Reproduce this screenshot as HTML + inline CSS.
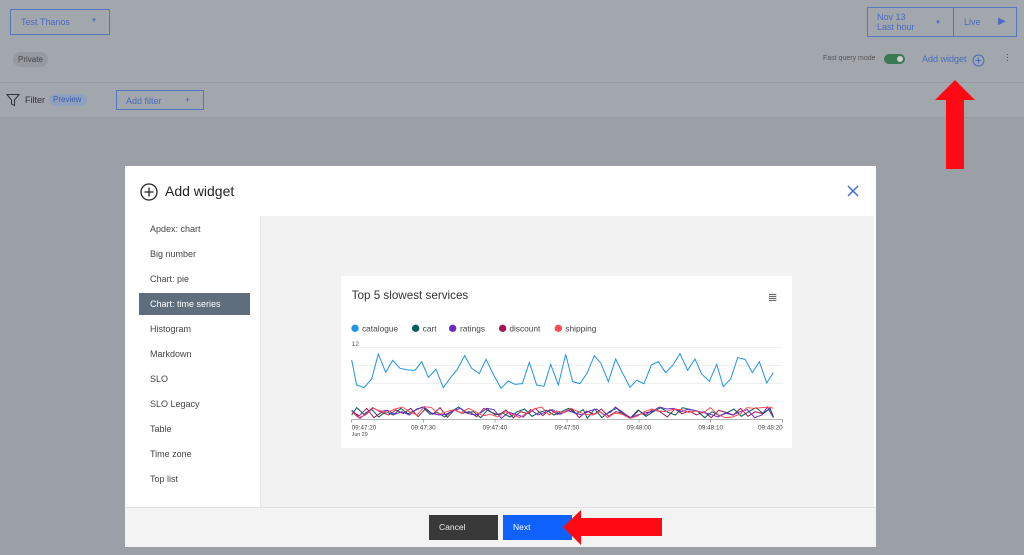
<!DOCTYPE html>
<html><head><style>
*{box-sizing:border-box;margin:0;padding:0}
body{width:1024px;height:555px;position:relative;overflow:hidden;font-family:"Liberation Sans",sans-serif;background:#9b9fa6}
.a{position:absolute}
.top{left:0;top:0;width:1024px;height:118px;background:#a2a6ad;border-bottom:1px solid #959aa1}
</style></head><body>
<div class="a top"></div>
<div class="a" style="left:0;top:82px;width:1024px;height:1px;background:#979ba2"></div>
<div class="a" style="left:10px;top:9px;width:100px;height:26px;border:1px solid #5577c0;font-size:9px;padding:7px 10px"><span style="color:#4a6bbf">Test Thanos</span><span style="position:absolute;left:80px;top:8px;color:#4a6bbf;font-size:6px">▼</span></div>
<div class="a" style="left:13px;top:52px;width:35px;height:15px;border-radius:8px;background:#959aa1;font-size:8px;color:#444;padding:3px 5px">Private</div>
<svg class="a" style="left:6px;top:93px" width="14" height="14" viewBox="0 0 14 14"><path d="M1 1.5h12L8.5 7v5.5l-3-1.5V7z" fill="none" stroke="#333" stroke-width="1"/></svg>
<div class="a" style="left:25px;top:95px;font-size:9px;color:#333">Filter</div>
<div class="a" style="left:49px;top:94px;width:38px;height:12px;border-radius:6px;background:#8f9fc0;font-size:8px;color:#3a5ea8;padding:1px 4px">Preview</div>
<div class="a" style="left:116px;top:90px;width:88px;height:20px;border:1px solid #5577c0;font-size:9px;color:#4a6bbf;padding:5px 9px">Add filter<span style="position:absolute;left:68px;top:4px">+</span></div>
<div class="a" style="left:867px;top:7px;width:87px;height:30px;border:1px solid #5577c0;font-size:9px;color:#4a6bbf;padding:4px 9px;line-height:10px">Nov 13<br>Last hour<span style="position:absolute;left:67px;top:10px;font-size:6px">▼</span></div>
<div class="a" style="left:953px;top:7px;width:64px;height:30px;border:1px solid #5577c0;font-size:9px;color:#4a6bbf;padding:9px 10px">Live<span style="position:absolute;left:44px;top:8px;font-size:10px">▶</span></div>
<div class="a" style="left:823px;top:55px;font-size:7px;color:#555">Fast query mode</div>
<div class="a" style="left:884px;top:54px;width:21px;height:10px;border-radius:5px;background:#3a7a52"><div style="position:absolute;right:2px;top:2px;width:6px;height:6px;border-radius:3px;background:#ccc"></div></div>
<div class="a" style="left:922px;top:54px;font-size:9px;color:#4a6bbf">Add widget</div>
<svg class="a" style="left:972px;top:54px" width="13" height="13"><circle cx="6.5" cy="6.5" r="5.5" fill="none" stroke="#4a6bbf"/><path d="M6.5 3.5v6M3.5 6.5h6" stroke="#4a6bbf"/></svg>
<div class="a" style="left:1006px;top:53px;font-size:9px;color:#444;line-height:3px">·<br>·<br>·</div>
<svg class="a" style="left:930px;top:78px" width="50" height="95"><path d="M25 2L45 22H34V91H16V22H5z" fill="#ff0a14"/></svg>

<div class="a" style="left:125px;top:166px;width:751px;height:381px;background:#fff">
 <svg class="a" style="left:15px;top:17px" width="18" height="18"><circle cx="9" cy="9" r="8" fill="none" stroke="#222" stroke-width="1.3"/><path d="M9 4.5v9M4.5 9h9" stroke="#222" stroke-width="1.3"/></svg>
 <div class="a" style="left:40px;top:17px;font-size:14px;color:#222">Add widget</div>
 <svg class="a" style="left:722px;top:19px" width="12" height="12"><path d="M1 1l10 10M11 1L1 11" stroke="#3c6fd6" stroke-width="1.5"/></svg>
 <div class="a" style="left:135px;top:50px;width:614px;height:291px;background:#f2f2f2;border-left:1px solid #e4e4e4"></div>
 <div class="a" style="left:0;top:341px;width:751px;height:40px;background:#f3f3f3;border-top:1px solid #e2e2e2"></div>
 <div class="a" style="left:14px;top:127px;width:111px;height:22px;background:#5f6e7c"></div>
 <div class="a" style="left:25px;top:51px;font-size:9px;color:#444;line-height:25px">Apdex: chart<br>Big number<br>Chart: pie<br><span style="color:#fff">Chart: time series</span><br>Histogram<br>Markdown<br>SLO<br>SLO Legacy<br>Table<br>Time zone<br>Top list</div>
 <div class="a" style="left:304px;top:349px;width:69px;height:25px;background:#393939;color:#eee;font-size:8.5px;padding:7px 10px">Cancel</div>
 <div class="a" style="left:378px;top:349px;width:69px;height:25px;background:#0f62fe;color:#fff;font-size:8.5px;padding:7px 10px">Next</div>
</div>
<svg class="a" style="left:560px;top:508px" width="105" height="40"><path d="M3 19L21 2V10H102V28H21V37z" fill="#ff0a14"/></svg>

<div class="a" style="left:341px;top:276px;width:451px;height:172px;background:#fff"></div>
<svg class="a" style="left:340px;top:275px" width="455" height="175" viewBox="0 0 1365 525" font-family="Liberation Sans,sans-serif">
<text x="35" y="72" font-size="35" fill="#333">Top 5 slowest services</text>
<g stroke="#555" stroke-width="3"><path d="M1287 58h22M1287 64h22M1287 70h22M1287 76h22"/></g>
<g font-size="25" fill="#444">
<circle cx="45" cy="160" r="11" fill="#1f94e6"/><text x="66" y="169">catalogue</text>
<circle cx="227" cy="160" r="11" fill="#005d5d"/><text x="248" y="169">cart</text>
<circle cx="338" cy="160" r="11" fill="#6929c4"/><text x="360" y="169">ratings</text>
<circle cx="488" cy="160" r="11" fill="#9f1853"/><text x="508" y="169">discount</text>
<circle cx="655" cy="160" r="11" fill="#fa4d56"/><text x="676" y="169">shipping</text>
</g>
<text x="35" y="213" font-size="20" fill="#555">12</text>
<g stroke="#e6e6e6" stroke-width="2"><path d="M35 217H1328M35 271H1328M35 325H1328M35 379H1328"/></g>
<path d="M35 433H1328" stroke="#888" stroke-width="2"/>
<g stroke="#888" stroke-width="2"><path d="M35 433v10M250 433v10M465 433v10M681 433v10M897 433v10M1112 433v10M1328 433v10"/></g>
<g font-size="19" fill="#444" text-anchor="middle"><text x="35" y="463" text-anchor="start">09:47:20</text><text x="250" y="463">09:47:30</text><text x="465" y="463">09:47:40</text><text x="681" y="463">09:47:50</text><text x="897" y="463">09:48:00</text><text x="1112" y="463">09:48:10</text><text x="1328" y="463" text-anchor="end">09:48:20</text></g>
<text x="35" y="483" font-size="16" fill="#444">Jun 29</text>
<g fill="none" stroke-width="3">
<polyline stroke="#9f1853" points="35,410 58,422 80,400 102,428 124,412 146,420 168,405 190,416 212,400 234,425 256,402 278,418 300,398 322,427 344,404 366,415 388,410 410,425 432,400 454,412 476,420 498,405 520,428 542,410 564,416 586,400 608,422 630,404 652,418 674,412 696,402 718,428 740,408 762,418 784,402 806,424 828,410 850,415 872,428 894,405 916,420 938,404 960,410 982,426 1004,402 1026,416 1048,408 1070,420 1092,410 1114,428 1136,406 1158,412 1180,420 1202,400 1224,424 1246,410 1268,416 1290,400 1300,425"/>
<polyline stroke="#005d5d" points="35,420 50,398 72,418 94,402 116,426 138,410 160,420 182,400 204,416 226,406 248,396 270,418 292,412 314,426 336,408 356,396 378,414 400,410 422,428 444,404 466,420 488,414 510,426 532,410 554,402 576,424 598,412 620,406 642,420 664,410 686,400 708,416 730,404 742,430 764,402 786,428 808,410 830,400 852,420 874,428 896,406 918,424 940,410 962,398 984,412 1006,420 1028,398 1050,404 1072,408 1094,428 1116,410 1138,422 1160,414 1182,402 1204,424 1226,410 1248,398 1270,416 1290,400 1300,428"/>
<polyline stroke="#6929c4" points="35,405 60,430 82,412 98,398 120,410 142,406 164,418 186,410 208,420 230,402 252,396 274,414 296,420 318,418 340,406 362,400 384,416 406,420 428,410 440,400 462,404 484,430 506,412 528,418 550,426 572,404 594,420 616,412 638,404 660,418 682,406 704,414 726,420 748,408 770,402 792,420 814,410 826,396 848,412 870,428 892,420 914,414 936,410 958,396 980,402 1002,400 1024,410 1046,402 1068,408 1090,412 1112,418 1134,426 1156,414 1178,420 1200,410 1222,404 1244,428 1266,420 1282,396 1300,428"/>
<polyline stroke="#fa4d56" points="35,410 55,428 77,420 99,400 121,408 143,412 165,402 187,396 209,410 231,420 253,395 275,398 297,418 319,410 341,404 363,414 385,400 407,410 429,422 451,418 473,426 495,410 517,418 539,428 561,414 583,402 605,396 627,420 649,408 671,412 693,400 715,410 737,418 759,420 781,410 803,428 825,414 847,418 869,430 891,424 913,410 935,402 957,408 979,410 1001,402 1023,404 1045,412 1067,408 1089,414 1111,398 1133,418 1155,428 1177,426 1199,418 1221,398 1243,400 1265,398 1287,396 1300,400"/>
<polyline stroke="#1f94e6" points="35,255 50,330 72,338 95,312 115,237 137,292 158,256 180,280 205,285 225,286 245,260 265,307 288,283 310,338 330,310 352,283 374,242 395,280 418,296 438,253 460,298 483,340 505,318 525,328 547,326 568,262 590,330 612,334 632,268 655,330 677,238 698,320 720,326 742,293 763,242 783,265 805,320 827,252 848,295 870,337 890,316 912,326 934,270 955,260 977,293 998,271 1020,236 1043,286 1065,252 1085,297 1108,319 1130,268 1150,335 1172,312 1193,248 1215,253 1237,293 1258,260 1280,324 1300,293"/>
</g>
</svg>
</body></html>
